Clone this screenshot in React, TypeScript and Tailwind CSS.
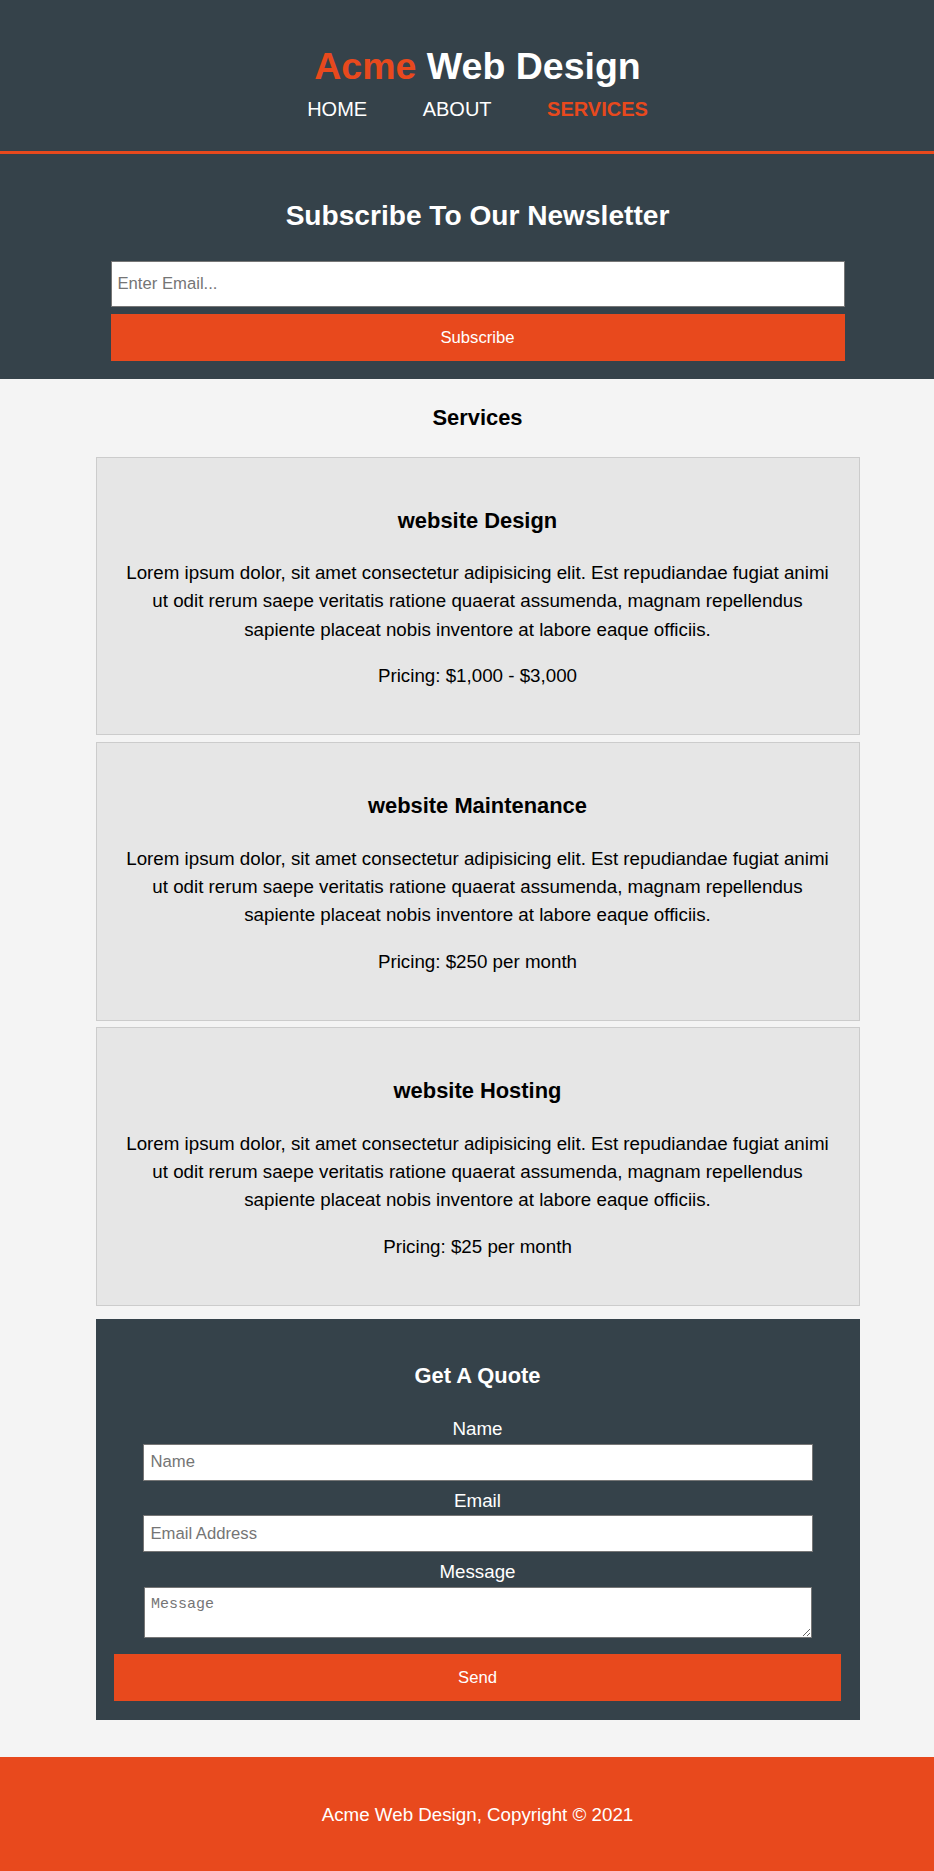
const services = [
  { title: 'website Design', price: 'Pricing: $1,000 - $3,000' },
  { title: 'website Maintenance', price: 'Pricing: $250 per month' },
  { title: 'website Hosting', price: 'Pricing: $25 per month' },
];

const lorem =
  'Lorem ipsum dolor, sit amet consectetur adipisicing elit. Est repudiandae fugiat animi ut odit rerum saepe veritatis ratione quaerat assumenda, magnam repellendus sapiente placeat nobis inventore at labore eaque officiis.';

const navItems = [
  { label: 'Home', current: false },
  { label: 'About', current: false },
  { label: 'Services', current: true },
];

const Header = () => (
  <header className="bg-[#35424a] text-white pt-[37.5px] pb-[27.25px] border-b-[3.75px] border-[#e8491d] text-center">
    <h1 className="text-[37.5px] font-bold leading-[1.5]">
      <span className="text-[#e8491d]">Acme</span> Web Design
    </h1>
    <nav>
      <ul className="flex justify-center gap-[5.5px]">
        {navItems.map((item) => (
          <li key={item.label} className="px-[25px]">
            <a
              href="#"
              className={`uppercase text-[20px] leading-[30px] ${item.current ? 'text-[#e8491d] font-bold' : 'text-white'}`}
            >
              {item.label}
            </a>
          </li>
        ))}
      </ul>
    </nav>
  </header>
);

const Newsletter = () => (
  <section className="bg-[#35424a] text-white pt-[18.75px] pb-[18.75px] text-center">
    <h1 className="mt-[22.5px] mb-[23px] text-[28.125px] font-bold leading-[1.5]">Subscribe To Our Newsletter</h1>
    <form className="w-[734px] mx-auto flex flex-col gap-[6.5px]">
      <input
        type="email"
        placeholder="Enter Email..."
        className="h-[46.5px] w-full bg-white text-black border border-[#767676] px-[6px] text-[16.67px] placeholder:text-[#757575]"
      />
      <button type="button" className="h-[47px] w-full bg-[#e8491d] text-white text-[16.67px]">
        Subscribe
      </button>
    </form>
  </section>
);

const ServiceCard = ({ title, price }: { title: string; price: string }) => (
  <li className="list-none border-[1.25px] border-[#cccccc] bg-[#e6e6e6] p-[25px] text-center">
    <h3 className="mt-[21.9px] mb-[21.9px] text-[21.9px] font-bold leading-[1.5]">{title}</h3>
    <p className="mb-[18.75px]">{lorem}</p>
    <p className="mb-[18.75px]">{price}</p>
  </li>
);

const Field = ({ label, children }: { label: string; children: React.ReactNode }) => (
  <div className="flex flex-col items-center">
    <label className="block w-full leading-[28.5px]">{label}</label>
    {children}
  </div>
);

const QuoteForm = () => (
  <div className="mt-[13px] bg-[#35424a] text-white p-[18.75px] text-center">
    <h3 className="mt-[22.5px] mb-[22px] text-[21.9px] font-bold leading-[1.5]">Get A Quote</h3>
    <form>
      <Field label="Name">
        <input
          type="text"
          placeholder="Name"
          className="mb-[6px] h-[37px] w-[670px] bg-white text-black border border-[#767676] px-[7px] text-[16.67px] placeholder:text-[#757575]"
        />
      </Field>
      <Field label="Email">
        <input
          type="email"
          placeholder="Email Address"
          className="mb-[6px] h-[37px] w-[670px] bg-white text-black border border-[#767676] px-[7px] text-[16.67px] placeholder:text-[#757575]"
        />
      </Field>
      <Field label="Message">
        <textarea
          placeholder="Message"
          className="mb-[16.5px] h-[51px] w-[668px] bg-white text-black border border-[#767676] px-[6.5px] pt-[8px] font-['Liberation_Mono',monospace] text-[15px] leading-[17px] placeholder:text-[#757575]"
        />
      </Field>
      <button type="button" className="h-[47px] w-full bg-[#e8491d] text-white text-[16.67px]">
        Send
      </button>
    </form>
  </div>
);

export default function App() {
  return (
    <div className="w-[934px] overflow-hidden bg-[#f4f4f4]">
      <div className="w-[955px] font-['Liberation_Sans',Arial,sans-serif] text-[18.75px] leading-[1.5] text-black">
        <Header />
        <Newsletter />
        <div className="w-[764px] mx-auto pb-[12.5px]">
          <h3 className="mt-[22.5px] mb-[22px] text-[21.9px] font-bold leading-[1.5] text-center">Services</h3>
          <ul className="flex flex-col gap-[6.75px]">
            {services.map((s) => (
              <ServiceCard key={s.title} title={s.title} price={s.price} />
            ))}
          </ul>
          <QuoteForm />
        </div>
        <footer className="mt-[25px] bg-[#e8491d] text-white p-[25px] text-center">
          <p className="my-[18.75px]">Acme Web Design, Copyright &copy; 2021</p>
        </footer>
      </div>
    </div>
  );
}
